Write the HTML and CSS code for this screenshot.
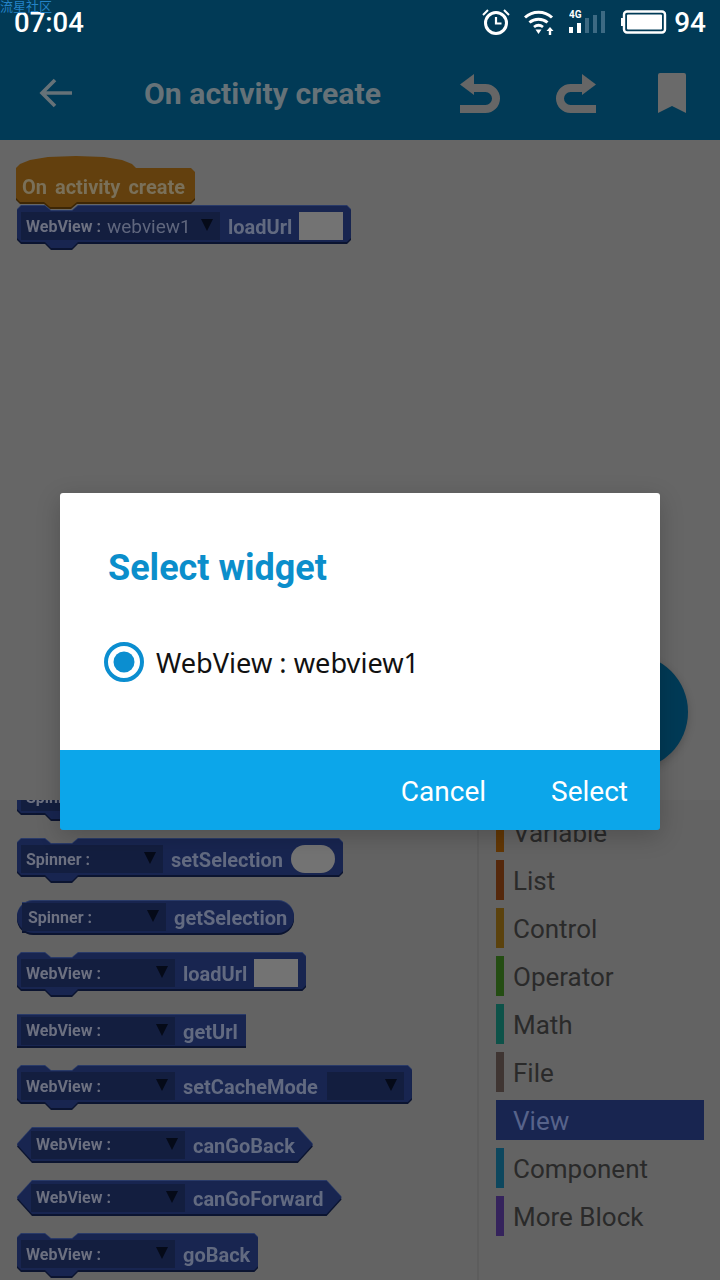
FILE: index.html
```html
<!DOCTYPE html>
<html lang="en">
  <head>
    <meta charset="utf-8" />
    <title>On activity create</title>
    <link rel="stylesheet" href="styles.css">
  </head>

  <body>
    <div class="app">
      <div class="watermark">流星社区</div>

      <div class="topbar">
        <div class="statusbar">
          <span class="clock">07:04</span>
          <div class="status-icons">
            <svg class="icon-alarm" width="28" height="26" viewBox="0 0 28 26">
              <circle cx="14" cy="14" r="10.5" fill="none" stroke="#fff" stroke-width="3"/>
              <path d="M14 8v6.500h5.500" fill="none" stroke="#fff" stroke-width="2.200"/>
              <path d="M1 6l5-5M27 6l-5-5" fill="none" stroke="#fff" stroke-width="2"/>
            </svg>
            <svg class="icon-wifi" width="31" height="26" viewBox="0 0 31 26">
              <path d="M1 8.500C8.500 1.500 20.500 1.500 28 8.500" fill="none" stroke="#fff" stroke-width="3"/>
              <path d="M5.500 13.500C10.500 9 18.500 9 23.500 13.500" fill="none" stroke="#fff" stroke-width="3"/>
              <path d="M10 18C12.800 15.800 16.200 15.800 19 18" fill="none" stroke="#fff" stroke-width="2.800"/>
              <path d="M11.500 20.500h6L14.500 25z" fill="#fff"/>
              <path d="M26 18l3.500 4h-2.300v4h-2.400v-4h-2.300z" fill="#fff"/>
            </svg>
            <svg class="icon-signal" width="38" height="26" viewBox="0 0 38 26">
              <text x="0" y="9" class="signal-label">4G</text>
              <rect x="0" y="18" width="4" height="6" fill="#fff"/>
              <rect x="8" y="14" width="4" height="10" fill="#fff"/>
              <rect x="16" y="9" width="4" height="15" fill="#3d6a83"/>
              <rect x="24" y="6" width="4" height="18" fill="#3d6a83"/>
              <rect x="32" y="2" width="4" height="22" fill="#3d6a83"/>
            </svg>
            <svg class="icon-battery" width="46" height="24" viewBox="0 0 46 24">
              <rect x="3" y="1.500" width="41" height="21" rx="3" fill="none" stroke="#fff" stroke-width="2.400"/>
              <rect x="6" y="4.500" width="35" height="15" rx="1" fill="#fff"/>
              <rect x="0" y="8" width="2" height="8" fill="#fff"/>
            </svg>
            <span class="battery-level">94</span>
          </div>
        </div>

        <div class="toolbar">
          <svg class="tool-back" width="34" height="30" viewBox="0 0 34 30">
            <path d="M33 15H3M16 2L3 15l13 13" fill="none" stroke="#667278" stroke-width="3.600"/>
          </svg>
          <div class="toolbar-title">On activity create</div>
          <svg class="tool-undo" width="40" height="40" viewBox="0 0 40 40">
            <path d="M0 11.500L14 1v21z" fill="#666666"/>
            <path d="M12 15H25.500A10.500 10.500 0 0 1 25.500 36H0" fill="none" stroke="#666666" stroke-width="8"/>
          </svg>
          <svg class="tool-redo" width="40" height="40" viewBox="0 0 40 40">
            <path d="M40 11.500L26 1v21z" fill="#666666"/>
            <path d="M28 15H14.500A10.500 10.500 0 0 0 14.500 36H40" fill="none" stroke="#666666" stroke-width="8"/>
          </svg>
          <svg class="tool-bookmark" width="28" height="40" viewBox="0 0 28 40">
            <path d="M2 0H26a2 2 0 0 1 2 2V40L14 33 0 40V2a2 2 0 0 1 2-2z" fill="#6a6a6a"/>
          </svg>
        </div>
      </div>

      <div class="editor">
        <div class="hat">
          <span class="hat-label">On activity create</span>
        </div>
        <div class="block block-stack block-joined">
          <div class="field field-long">
            <span class="field-label">WebView :</span>
            <span class="field-value">webview1</span>
            <span class="arrow"></span>
          </div>
          <span class="method">loadUrl</span>
          <span class="input-box"></span>
        </div>
        <div class="fab"></div>
      </div>

      <div class="palette">
        <div class="palette-blocks">
          <div class="block block-stack block-first">
            <div class="field field-spinner">
              <span class="field-label">Spinner :</span>
              <span class="arrow"></span>
            </div>
            <span class="method">setSelection</span>
          </div>
          <div class="block block-stack">
            <div class="field field-spinner">
              <span class="field-label">Spinner :</span>
              <span class="arrow"></span>
            </div>
            <span class="method">setSelection</span>
            <span class="input-pill"></span>
          </div>
          <div class="block block-pill">
            <div class="field field-spinner">
              <span class="field-label">Spinner :</span>
              <span class="arrow"></span>
            </div>
            <span class="method">getSelection</span>
          </div>
          <div class="block block-stack">
            <div class="field field-webview">
              <span class="field-label">WebView :</span>
              <span class="arrow"></span>
            </div>
            <span class="method">loadUrl</span>
            <span class="input-box"></span>
          </div>
          <div class="block block-rect">
            <div class="field field-webview">
              <span class="field-label">WebView :</span>
              <span class="arrow"></span>
            </div>
            <span class="method">getUrl</span>
          </div>
          <div class="block block-stack">
            <div class="field field-webview">
              <span class="field-label">WebView :</span>
              <span class="arrow"></span>
            </div>
            <span class="method">setCacheMode</span>
            <div class="field field-mode">
              <span class="arrow"></span>
            </div>
          </div>
          <div class="block block-hex">
            <div class="field field-webview">
              <span class="field-label">WebView :</span>
              <span class="arrow"></span>
            </div>
            <span class="method">canGoBack</span>
          </div>
          <div class="block block-hex">
            <div class="field field-webview">
              <span class="field-label">WebView :</span>
              <span class="arrow"></span>
            </div>
            <span class="method">canGoForward</span>
          </div>
          <div class="block block-stack">
            <div class="field field-webview">
              <span class="field-label">WebView :</span>
              <span class="arrow"></span>
            </div>
            <span class="method">goBack</span>
          </div>
        </div>

        <div class="palette-categories">
          <div class="category cat-variable">Variable</div>
          <div class="category cat-list">List</div>
          <div class="category cat-control">Control</div>
          <div class="category cat-operator">Operator</div>
          <div class="category cat-math">Math</div>
          <div class="category cat-file">File</div>
          <div class="category cat-view active">View</div>
          <div class="category cat-component">Component</div>
          <div class="category cat-more">More Block</div>
        </div>
      </div>

      <div class="dialog">
        <div class="dialog-body">
          <div class="dialog-title">Select widget</div>
          <div class="radio-row">
            <svg width="40" height="40" viewBox="0 0 40 40">
              <circle cx="20" cy="20" r="18" fill="none" stroke="#0b8ed0" stroke-width="4"/>
              <circle cx="20" cy="20" r="10.500" fill="#0b8ed0"/>
            </svg>
            <span class="radio-label">WebView : webview1</span>
          </div>
        </div>
        <div class="dialog-actions">
          <span class="dialog-button">Cancel</span>
          <span class="dialog-button">Select</span>
        </div>
      </div>
    </div>
  </body>
</html>
```

FILE: styles.css
```css
html, body {
  margin: 0;
  padding: 0;
}

body {
  font-family: 'Roboto', sans-serif;
  background-color: #666666;
}

.app {
  position: relative;
  width: 720px;
  height: 1280px;
  overflow: hidden;
  display: flex;
  flex-direction: column;
  background-color: #666666;
}

.watermark {
  position: absolute;
  left: 0;
  top: -2px;
  font-family: 'Noto Sans CJK SC', sans-serif;
  font-size: 13px;
  line-height: 15px;
  color: #2483c6;
}

/* top bar */

.topbar {
  height: 140px;
  background-color: #013a56;
  flex: none;
}

.statusbar {
  height: 44px;
  margin-bottom: 2px;
  padding: 0 14px;
  display: flex;
  align-items: center;
  justify-content: space-between;
  color: #ffffff;
}

.clock {
  font-size: 27.500px;
  font-weight: 500;
}

.status-icons {
  display: flex;
  align-items: center;
}

.icon-alarm {
  margin-right: 14px;
}

.icon-wifi {
  margin-right: 14px;
}

.icon-signal {
  margin-right: 14px;
}

.icon-battery {
  margin-right: 7px;
}

.signal-label {
  font-family: 'Roboto', sans-serif;
  font-size: 10px;
  font-weight: 700;
  fill: #ffffff;
}

.battery-level {
  font-size: 28px;
  font-weight: 500;
}

.toolbar {
  height: 94px;
  padding-left: 39px;
  display: flex;
  align-items: center;
}

.toolbar-title {
  margin-left: 71px;
  width: 316px;
  font-size: 30.200px;
  font-weight: 700;
  color: #667278;
}

.tool-undo {
  margin-right: 56px;
}

.tool-redo {
  margin-right: 62px;
}

/* editor */

.editor {
  position: relative;
  height: 660px;
  flex: none;
  padding: 16px 0 0 16px;
  box-sizing: border-box;
  background-color: #666666;
}

.fab {
  position: absolute;
  left: 572px;
  top: 514px;
  width: 116px;
  height: 116px;
  border-radius: 50%;
  background-color: #013a56;
  box-shadow: 0 3px 8px rgba(0, 0, 0, 0.2);
}

.hat {
  position: relative;
  width: 179px;
  height: 53px;
  filter: drop-shadow(0 2px 0 #3d2605);
}

.hat::before {
  content: "";
  position: absolute;
  inset: 0;
  background-color: #63400e;
  clip-path: polygon(0 12px, 4px 8px, 14px 4px, 32px 1px, 60px 0, 88px 1px, 106px 4px, 116px 8px, 120px 12px, 175px 12px, 179px 16px, 179px 42px, 175px 46px, 61px 46px, 55px 51px, 34px 51px, 28px 46px, 4px 46px, 0 42px);
}

.hat-label {
  position: absolute;
  left: 6px;
  top: 19px;
  font-size: 20px;
  font-weight: 700;
  word-spacing: 3px;
  white-space: nowrap;
  color: #7a7059;
}

/* blocks */

.block {
  position: relative;
  display: inline-flex;
  align-items: center;
  align-self: flex-start;
  box-sizing: border-box;
  filter: drop-shadow(0 2px 0 #0b1430) drop-shadow(0 -1px 0 #293a68);
}

.block::before {
  content: "";
  position: absolute;
  inset: 0;
  z-index: -1;
  background-color: #182550;
}

.block-stack {
  height: 42px;
  padding: 6px 8px 8px 4px;
}

.block-stack::before {
  clip-path: polygon(0 4px, 4px 0, 28px 0, 34px 5px, 55px 5px, 61px 0, calc(100% - 4px) 0, 100% 4px, 100% calc(100% - 10px), calc(100% - 4px) calc(100% - 6px), 61px calc(100% - 6px), 55px 100%, 34px 100%, 28px calc(100% - 6px), 4px calc(100% - 6px), 0 calc(100% - 10px));
}

.block-joined {
  display: flex;
  width: 334px;
  margin-left: 1px;
  margin-top: -3px;
}

.block-first {
  margin-top: -23px;
}

.block-pill {
  height: 32px;
  padding: 0 7px 0 5px;
}

.block-pill::before {
  border-radius: 17px;
}

.block-rect {
  height: 31px;
  padding: 0 8px 0 4px;
}

.block-hex {
  height: 33px;
  padding: 0 18px 0 14px;
}

.block-hex::before {
  clip-path: polygon(0 50%, 15px 0, calc(100% - 15px) 0, 100% 50%, calc(100% - 15px) 100%, 15px 100%);
}

.field {
  position: relative;
  display: flex;
  align-items: center;
  box-sizing: border-box;
  height: 28px;
  padding: 0 7px 0 5px;
  background-color: #131e3f;
}

.field-long {
  width: 199px;
}

.field-spinner {
  width: 142px;
}

.block-pill .field-spinner {
  width: 144px;
  padding-left: 6px;
}

.field-webview {
  width: 154px;
}

.field-mode {
  width: 77px;
  margin-left: 9px;
}

.field-label {
  font-size: 16px;
  font-weight: 700;
  color: #6c7080;
  white-space: nowrap;
}

.field-value {
  margin-left: 6px;
  font-size: 19px;
  color: #5f667d;
}

.arrow {
  width: 0;
  height: 0;
  margin-left: auto;
  margin-top: -2px;
  border-left: 6px solid transparent;
  border-right: 6px solid transparent;
  border-top: 12px solid #050a18;
}

.method {
  margin-left: 8px;
  margin-top: 2px;
  font-size: 20px;
  font-weight: 700;
  color: #626a80;
  white-space: nowrap;
}

.input-box {
  width: 44px;
  height: 28px;
  margin-left: 7px;
  background-color: #737373;
}

.block-joined .input-box {
  margin-left: auto;
}

.input-pill {
  width: 44px;
  height: 28px;
  margin-left: 8px;
  border-radius: 14px;
  background-color: #737373;
}

/* palette */

.palette {
  flex: 1;
  display: flex;
  background-color: #636363;
  overflow: hidden;
}

.palette-blocks {
  width: 479px;
  box-sizing: border-box;
  padding-left: 17px;
  display: flex;
  flex-direction: column;
  gap: 20px;
  border-right: 2px solid #5d5d5d;
  isolation: isolate;
}

.palette-categories {
  padding: 12px 0 0 17px;
  display: flex;
  flex-direction: column;
  gap: 8px;
}

.category {
  width: 208px;
  height: 40px;
  box-sizing: border-box;
  padding-left: 9px;
  border-left: 8px solid;
  font-size: 26px;
  line-height: 42px;
  color: #2a2a2a;
}

.cat-variable { border-color: #623705; }
.cat-list { border-color: #55280c; }
.cat-control { border-color: #5b420d; }
.cat-operator { border-color: #244d13; }
.cat-math { border-color: #0d5249; }
.cat-file { border-color: #3f3532; }
.cat-view { border-color: #182550; }
.cat-component { border-color: #0d475e; }
.cat-more { border-color: #35235c; }

.category.active {
  background-color: #182550;
  color: #57638a;
}

/* dialog */

.dialog {
  position: absolute;
  left: 60px;
  top: 493px;
  width: 600px;
  height: 337px;
  display: flex;
  flex-direction: column;
  border-radius: 3px;
  overflow: hidden;
  box-shadow: 0 6px 24px rgba(0, 0, 0, 0.2);
}

.dialog-body {
  flex: 1;
  background-color: #ffffff;
  padding: 55px 0 0 44px;
}

.dialog-title {
  margin-left: 4px;
  font-size: 36px;
  line-height: 40px;
  font-weight: 700;
  color: #0b8ecb;
}

.radio-row {
  margin-top: 54px;
  display: flex;
  align-items: center;
  gap: 12px;
}

.radio-label {
  font-family: 'Noto Sans', sans-serif;
  font-size: 27.200px;
  color: #111111;
}

.dialog-actions {
  height: 80px;
  flex: none;
  box-sizing: border-box;
  background-color: #0ca6ea;
  padding: 2px 32px 0 0;
  display: flex;
  align-items: center;
  justify-content: flex-end;
  gap: 65px;
}

.dialog-button {
  font-size: 28px;
  color: #ffffff;
}
```
